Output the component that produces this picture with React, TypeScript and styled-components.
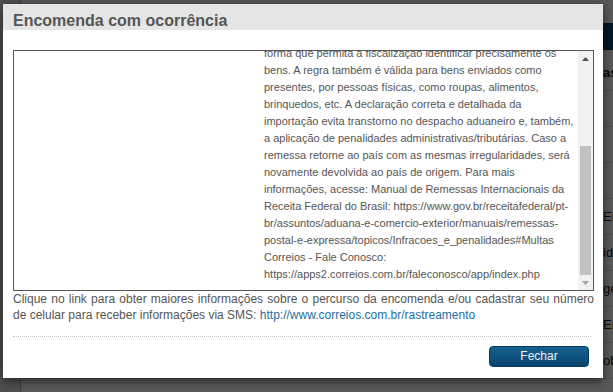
import React, { useLayoutEffect, useRef, useState } from "react";
import styled, { createGlobalStyle } from "styled-components";

const GlobalStyle = createGlobalStyle`
  html, body {
    margin: 0;
    padding: 0;
    width: 613px;
    height: 392px;
    overflow: hidden;
  }
  body {
    font-family: "Liberation Sans", Arial, sans-serif;
    background: #e6e6e6;
  }
`;

/* ---------- page behind the dialog ---------- */

const Page = styled.div`
  position: relative;
  width: 613px;
  height: 392px;
  display: flex;
  background: #e6e6e6;
  overflow: hidden;
`;

const Gutter = styled.div`
  width: 20px;
  flex: none;
`;

const Main = styled.div`
  flex: 1;
  background: #fff;
  border-left: 1px solid #b5b5b5;
  padding-top: 23px;
  display: flex;
  flex-direction: column;
`;

const TopBar = styled.div`
  height: 27px;
  background: #0b4468;
  margin-bottom: 5px;
`;

const Row = styled.div`
  height: 36px;
  box-sizing: border-box;
  border-bottom: 1px solid #dcdcdc;
  display: grid;
  grid-template-columns: 582px 1fr;
  align-items: center;
  font-size: 13px;
  color: #222;
  white-space: nowrap;
  overflow: hidden;
`;

const RowText = styled.span<{ $bold?: boolean }>`
  font-weight: ${(p) => (p.$bold ? 700 : 400)};
`;

const Overlay = styled.div`
  position: absolute;
  inset: 0;
  background: rgba(0, 0, 0, 0.65);
`;

/* ---------- dialog ---------- */

const Modal = styled.div`
  position: absolute;
  left: 3px;
  top: 4px;
  width: 600px;
  height: 374px;
  background: #fff;
  box-shadow: 0 3px 10px rgba(0, 0, 0, 0.55);
  display: flex;
  flex-direction: column;
`;

const Header = styled.div`
  height: 26px;
  box-sizing: border-box;
  background: #e5e5e5;
  padding: 7px 10px 0;
`;

const Title = styled.h4`
  margin: 0;
  font-size: 16px;
  line-height: 19px;
  font-weight: 700;
  color: #555;
`;

const Body = styled.div`
  padding: 20px 9px 0 10px;
  display: flex;
  flex-direction: column;
`;

const ContentBox = styled.div`
  height: 241px;
  box-sizing: border-box;
  border: 1px solid #555;
  background: #fff;
  display: flex;
`;

const Viewport = styled.div`
  flex: 1;
  min-width: 0;
  overflow: hidden;
`;

const ScrollBar = styled.div`
  width: 15px;
  flex: none;
  background: #f1f1f1;
  display: flex;
  flex-direction: column;
`;

const ArrowButton = styled.div`
  height: 15px;
  flex: none;
  display: flex;
  align-items: center;
  justify-content: center;
`;

const Track = styled.div`
  flex: 1;
  display: flex;
  flex-direction: column;
  justify-content: flex-end;
  padding: 0 2px;
`;

const Thumb = styled.div`
  background: #c1c1c1;
`;

const ContentGrid = styled.div`
  display: grid;
  grid-template-columns: 250px 1fr;
  padding: 7px 0;
  font-size: 11px;
  line-height: 17px;
  color: #555;
`;

const SideCell = styled.div`
  padding-right: 10px;
`;

const TextCell = styled.div``;

const Info = styled.p`
  margin: 0;
  font-size: 12px;
  line-height: 16px;
  color: #555;
  text-align: justify;
`;

const Link = styled.a`
  color: #1d6fa5;
  text-decoration: none;
`;

const Separator = styled.div`
  margin: 13px 3px 0 0;
  border-top: 1px dotted #c4c4c4;
`;

const Footer = styled.div`
  display: flex;
  justify-content: flex-end;
  padding: 9px 14px 10px 0;
`;

const Button = styled.button`
  width: 100px;
  height: 21px;
  box-sizing: border-box;
  border: 1px solid #0a3a5c;
  border-radius: 4px;
  background: linear-gradient(#15618f, #0a4370);
  color: #eef3f7;
  font-family: "Liberation Sans", Arial, sans-serif;
  font-size: 12px;
  line-height: 19px;
  padding: 0;
  cursor: pointer;
`;

const rows: { text: string; bold?: boolean }[] = [
  { text: "asa", bold: true },
  { text: "" },
  { text: "" },
  { text: "" },
  { text: "Encaminhado" },
  { text: "ido" },
  { text: "gerado" },
  { text: "Encaminhado" },
  { text: "objeto" },
];

const ArrowUp = () => (
  <svg width="7" height="4" viewBox="0 0 7 4">
    <polygon points="0,4 7,4 3.5,0" fill="#505050" />
  </svg>
);

const ArrowDown = () => (
  <svg width="7" height="4" viewBox="0 0 7 4">
    <polygon points="0,0 7,0 3.5,4" fill="#a3a3a3" />
  </svg>
);

export default function App() {
  const viewRef = useRef<HTMLDivElement>(null);
  const [ratio, setRatio] = useState(0.6);

  useLayoutEffect(() => {
    const el = viewRef.current;
    if (el) {
      el.scrollTop = el.scrollHeight;
      setRatio(el.clientHeight / el.scrollHeight);
    }
  }, []);

  return (
    <>
      <GlobalStyle />
      <Page>
        <Gutter />
        <Main>
          <TopBar />
          {rows.map((r, i) => (
            <Row key={i}>
              <span />
              <RowText $bold={r.bold}>{r.text}</RowText>
            </Row>
          ))}
        </Main>
        <Overlay />
        <Modal>
          <Header>
            <Title>Encomenda com ocorrência</Title>
          </Header>
          <Body>
            <ContentBox>
              <Viewport ref={viewRef}>
                <ContentGrid>
                  <SideCell>Objeto devolvido ao remetente</SideCell>
                  <TextCell>
                    A remessa foi devolvida por determinação da autoridade
                    aduaneira, em razão de irregularidade na declaração de
                    conteúdo. De acordo com a legislação vigente, todas as
                    remessas internacionais devem estar acompanhadas de
                    declaração de conteúdo completa e verdadeira, informando a
                    descrição, a quantidade e o valor de cada item. Não são
                    aceitas descrições genéricas. O remetente deve descrever
                    cada item de
                    <br />
                    forma que permita à fiscalização identificar precisamente os
                    bens. A regra também é válida para bens enviados como
                    presentes, por pessoas físicas, como roupas, alimentos,
                    brinquedos, etc. A declaração correta e detalhada da
                    importação evita transtorno no despacho aduaneiro e, também,
                    a aplicação de penalidades administrativas/tributárias. Caso
                    a remessa retorne ao país com as mesmas irregularidades,
                    será novamente devolvida ao país de origem. Para mais
                    informações, acesse: Manual de Remessas Internacionais da
                    Receita Federal do Brasil:
                    https://www.gov.br/receitafederal/pt-br/assuntos/aduana-e-comercio-exterior/manuais/remessas-postal-e-expressa/topicos/Infracoes_e_penalidades#Multas
                    Correios - Fale Conosco:
                    https://apps2.correios.com.br/faleconosco/app/index.php
                  </TextCell>
                </ContentGrid>
              </Viewport>
              <ScrollBar>
                <ArrowButton>
                  <ArrowUp />
                </ArrowButton>
                <Track>
                  <Thumb style={{ height: `${ratio * 100}%` }} />
                </Track>
                <ArrowButton>
                  <ArrowDown />
                </ArrowButton>
              </ScrollBar>
            </ContentBox>
            <Info>
              Clique no link para obter maiores informações sobre o percurso da
              encomenda e/ou cadastrar seu número de celular para receber
              informações via SMS:{" "}
              <Link href="#">http://www.correios.com.br/rastreamento</Link>
            </Info>
            <Separator />
          </Body>
          <Footer>
            <Button type="button">Fechar</Button>
          </Footer>
        </Modal>
      </Page>
    </>
  );
}
